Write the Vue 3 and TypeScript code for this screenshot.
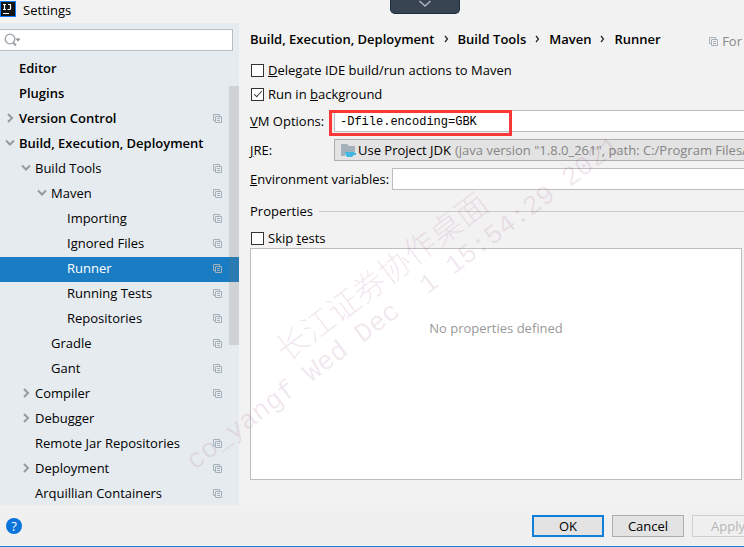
<script setup lang="ts">
import { ref } from 'vue'

interface TreeItem {
  label: string
  depth: number
  bold?: boolean
  state?: 'open' | 'closed'
  project?: boolean
}

const items: TreeItem[] = [
  { label: 'Editor', depth: 0, bold: true },
  { label: 'Plugins', depth: 0, bold: true },
  { label: 'Version Control', depth: 0, bold: true, state: 'closed', project: true },
  { label: 'Build, Execution, Deployment', depth: 0, bold: true, state: 'open' },
  { label: 'Build Tools', depth: 1, state: 'open', project: true },
  { label: 'Maven', depth: 2, state: 'open', project: true },
  { label: 'Importing', depth: 3, project: true },
  { label: 'Ignored Files', depth: 3, project: true },
  { label: 'Runner', depth: 3, project: true },
  { label: 'Running Tests', depth: 3, project: true },
  { label: 'Repositories', depth: 3, project: true },
  { label: 'Gradle', depth: 2, project: true },
  { label: 'Gant', depth: 2, project: true },
  { label: 'Compiler', depth: 1, state: 'closed', project: true },
  { label: 'Debugger', depth: 1, state: 'closed' },
  { label: 'Remote Jar Repositories', depth: 1, project: true },
  { label: 'Deployment', depth: 1, state: 'closed', project: true },
  { label: 'Arquillian Containers', depth: 1, project: true },
]

const crumbs = ['Build, Execution, Deployment', 'Build Tools', 'Maven', 'Runner']
const stamp = 'co_yangf Wed Dec  1 15:54:29 2021'

const selected = ref('Runner')
const query = ref('')
const delegate = ref(false)
const background = ref(true)
const skipTests = ref(false)
const vmOptions = ref('-Dfile.encoding=GBK')
const environment = ref('')
</script>

<template>
  <div class="window">
    <header class="titlebar">
      <svg class="logo" width="16" height="16" viewBox="0 0 16 16" aria-hidden="true">
        <rect width="16" height="16" fill="#087cfa" />
        <rect x="1" y="1" width="14" height="14" fill="#151515" />
        <path d="M3 3.500h3M4.500 3.500v5M3 8.500h3M8 3.500h3M10.500 3.500v4q0 1-1 1h-2" stroke="#fff" stroke-width="1.200" fill="none" />
        <path d="M3 12.500h6" stroke="#fff" />
      </svg>
      <span>Settings</span>
    </header>

    <div class="body">
      <aside class="sidebar">
        <div class="search">
          <svg width="18" height="14" viewBox="0 0 18 14" aria-hidden="true">
            <circle cx="6" cy="6" r="4.800" fill="none" stroke="#99a1a8" stroke-width="1.300" />
            <path d="M9 9.500l3 3" stroke="#99a1a8" stroke-width="2" />
            <path d="M11.500 5.500h5l-2.500 3z" fill="#7f8b91" />
          </svg>
          <input v-model="query" type="text" aria-label="Search settings" />
        </div>
        <ul class="tree" role="tree">
          <li
            v-for="item in items"
            :key="item.label"
            role="treeitem"
            :aria-selected="item.label === selected"
            :class="['node', 'depth-' + item.depth, { bold: item.bold, selected: item.label === selected }]"
            @click="selected = item.label"
          >
            <span class="arrow">
              <svg v-if="item.state === 'open'" width="10" height="10" viewBox="0 0 10 10" aria-hidden="true">
                <path d="M1 2.500l4 4 4-4" />
              </svg>
              <svg v-else-if="item.state === 'closed'" width="10" height="10" viewBox="0 0 10 10" aria-hidden="true">
                <path d="M3 1l4 4-4 4" />
              </svg>
            </span>
            <span class="label">{{ item.label }}</span>
            <svg v-if="item.project" class="copy" width="9" height="9" viewBox="0 0 9 9" aria-hidden="true">
              <path d="M2 6.500H.5V.5h6V2M2.500 2.500h6v6h-6zM4 4.500h3M4 6.500h3" />
            </svg>
          </li>
        </ul>
        <div class="scroll-thumb"></div>
      </aside>

      <main class="content">
        <nav class="crumbs">
          <template v-for="(crumb, i) in crumbs" :key="crumb">
            <svg v-if="i > 0" class="separator" width="5" height="8" viewBox="0 0 5 8" aria-hidden="true">
              <path d="M1 1l2.500 3L1 7" />
            </svg>
            <span>{{ crumb }}</span>
          </template>
          <span class="scope">
            <svg class="copy" width="9" height="9" viewBox="0 0 9 9" aria-hidden="true">
              <path d="M2 6.500H.5V.5h6V2M2.500 2.500h6v6h-6zM4 4.500h3M4 6.500h3" />
            </svg>
            For
          </span>
        </nav>

        <label class="check"><input v-model="delegate" type="checkbox" /><span><u>D</u>elegate IDE build/run actions to Maven</span></label>
        <label class="check"><input v-model="background" type="checkbox" /><span>Run in <u>b</u>ackground</span></label>

        <div class="row vm">
          <label for="vm"><u>V</u>M Options:</label>
          <div class="field">
            <input id="vm" v-model="vmOptions" class="mono" type="text" />
            <div class="highlight"></div>
          </div>
        </div>
        <div class="row">
          <label for="jre"><u>J</u>RE:</label>
          <div class="field combo">
            <svg width="16" height="15" viewBox="0 0 16 15" aria-hidden="true">
              <path d="M0 1h6l2 2h6v6H4v4H0z" fill="#a5b1b9" />
              <path d="M4 9h9.500v1H15v2h-2l-2 2H6q-2-2-2-5z" fill="#40b6e0" />
            </svg>
            <select id="jre"><option>Use Project JDK</option></select>
            <span class="hint">(java version "1.8.0_261", path: C:/Program Files/Java)</span>
          </div>
        </div>
        <div class="row env">
          <label for="env"><u>E</u>nvironment variables:</label>
          <div class="field"><input id="env" v-model="environment" type="text" /></div>
        </div>

        <h2 class="section">Properties</h2>
        <label class="check skip"><input v-model="skipTests" type="checkbox" /><span>Skip <u>t</u>ests</span></label>
        <div class="properties">No properties defined</div>
      </main>
    </div>

    <footer class="footer">
      <button class="help" type="button" aria-label="Help">?</button>
      <div class="actions">
        <button class="action primary" type="button">OK</button>
        <button class="action" type="button">Cancel</button>
        <button class="action" type="button" disabled>Apply</button>
      </div>
    </footer>

    <div class="pull-tab">
      <svg width="14" height="8" viewBox="0 0 14 8" aria-hidden="true">
        <path d="M1.500 1l5.500 5 5.500-5" fill="none" stroke="#aeb6c0" stroke-width="1.500" />
      </svg>
    </div>
    <div class="watermark cjk">长江证券协作桌面</div>
    <div class="watermark stamp">{{ stamp }}</div>
  </div>
</template>

<style>
body {
  background: #f0f0f0;
}
</style>

<style scoped>
.window {
  position: relative;
  display: flex;
  flex-direction: column;
  box-sizing: border-box;
  height: 100vh;
  overflow: hidden;
  border-bottom: 1px solid #1883d7;
  background: #f2f2f2;
  color: #000;
  font: 13px/20px "Open Sans", "Noto Sans", sans-serif;
}
input,
select,
button {
  box-sizing: border-box;
  margin: 0;
  font: inherit;
  color: inherit;
}
.titlebar {
  display: flex;
  flex: none;
  align-items: flex-start;
  gap: 7px;
  height: 23px;
}
.logo {
  margin-top: 1px;
}
.body {
  display: flex;
  flex: 1;
  min-height: 0;
}
.sidebar {
  position: relative;
  flex: none;
  width: 239px;
  overflow: hidden;
  background: #e6ebef;
}
.search {
  display: flex;
  align-items: center;
  box-sizing: border-box;
  height: 22px;
  margin: 6px 6px 6px 0;
  padding-left: 4px;
  border: 1px solid #b8bdc1;
  border-left: 0;
  background: #fff;
}
.search input {
  flex: 1;
  min-width: 0;
  border: 0;
  outline: 0;
  background: transparent;
}
.tree {
  margin: 0;
  padding: 0;
  list-style: none;
}
.node {
  display: flex;
  align-items: center;
  box-sizing: border-box;
  height: 25px;
  padding: 0 17px 3px 5px;
  white-space: nowrap;
}
.depth-1 {
  padding-left: 21px;
}
.depth-2 {
  padding-left: 37px;
}
.depth-3 {
  padding-left: 53px;
}
.bold {
  font-weight: 600;
}
.selected {
  background: #1a7dc4;
  color: #fff;
}
.arrow {
  display: flex;
  width: 14px;
}
.arrow path {
  fill: none;
  stroke: #959a9d;
  stroke-width: 2;
}
.label {
  flex: 1;
}
.copy {
  flex: none;
}
.copy path {
  fill: none;
  stroke: #a5b0b8;
}
.scroll-thumb {
  position: absolute;
  top: 63px;
  right: 0;
  width: 10px;
  height: 259px;
  background: rgba(115, 115, 115, 0.2);
}
.content {
  display: flex;
  flex: 1;
  flex-direction: column;
  min-width: 0;
  padding: 6px 0 25px 11px;
}
.crumbs {
  display: flex;
  align-items: center;
  gap: 9px;
  height: 20px;
  margin-bottom: 9px;
  font-weight: 600;
  white-space: nowrap;
}
.separator {
  flex: none;
}
.separator path {
  fill: none;
  stroke: #222;
  stroke-width: 1.2;
}
.scope {
  display: flex;
  align-items: center;
  gap: 4px;
  margin: 4px 2px 0 auto;
  color: #87898b;
  font-weight: 400;
}
.check {
  display: flex;
  align-items: center;
  align-self: flex-start;
  gap: 4px;
  height: 24px;
  padding-left: 1px;
}
.check input {
  position: relative;
  width: 13px;
  height: 13px;
  border: 1px solid #333;
  background: #fff;
  appearance: none;
}
.check input:checked::after {
  position: absolute;
  top: 0;
  left: 4px;
  width: 3px;
  height: 7px;
  border: solid #333;
  border-width: 0 1px 1px 0;
  content: "";
  transform: rotate(42deg);
}
.row {
  display: flex;
  align-items: center;
  height: 22px;
  margin-bottom: 7px;
  white-space: nowrap;
}
.row label {
  flex: none;
  width: 84px;
}
.vm {
  margin-top: 4px;
}
.env label {
  width: 142px;
}
.field {
  position: relative;
  flex: 1;
  min-width: 0;
  height: 22px;
}
.field input {
  display: block;
  width: 100%;
  height: 22px;
  padding: 0 5px;
  border: 1px solid #bdbdbd;
  border-right: 0;
  border-radius: 0;
  outline: 0;
  background: #fff;
}
.field .mono {
  padding-top: 2px;
  font: 12px/18px "Liberation Mono", monospace;
}
.highlight {
  position: absolute;
  top: 0;
  left: -5px;
  box-sizing: border-box;
  width: 183px;
  height: 26px;
  border: 3px solid #fb3737;
  pointer-events: none;
}
.combo {
  display: flex;
  align-items: center;
  box-sizing: border-box;
  padding-left: 6px;
  overflow: hidden;
  border: 1px solid #adadad;
  border-right: 0;
  background: #e3e3e3;
}
.combo svg {
  flex: none;
}
.combo select {
  flex: none;
  height: 20px;
  padding: 0 3px 0 1px;
  border: 0;
  outline: 0;
  background: transparent;
  appearance: none;
}
.hint {
  color: #858585;
}
.section {
  display: flex;
  align-items: center;
  gap: 6px;
  margin: 4px 0 7px;
  font-size: 13px;
  font-weight: 400;
}
.section::after {
  flex: 1;
  height: 1px;
  background: #c9c9c9;
  content: "";
}
.skip {
  height: 20px;
}
.properties {
  display: flex;
  flex: 1;
  align-items: flex-start;
  justify-content: center;
  box-sizing: border-box;
  margin-right: 2px;
  padding-top: 69px;
  border: 1px solid #bdbdbd;
  background: #fff;
  color: #999;
}
.footer {
  display: flex;
  flex: none;
  align-items: center;
  justify-content: space-between;
  height: 41px;
  padding-left: 6px;
  background: #f0f0f0;
}
.help {
  width: 16px;
  height: 16px;
  padding: 0;
  border: 0;
  border-radius: 50%;
  background: #0a74da;
  color: #fff;
  font-size: 13px;
  line-height: 16px;
}
.actions {
  display: flex;
  gap: 8px;
  margin-right: -20px;
}
.action {
  width: 72px;
  height: 22px;
  padding: 0;
  border: 1px solid #adadad;
  background: #e3e3e3;
  line-height: 18px;
}
.primary {
  border: 2px solid #0f80d9;
}
.action:disabled {
  border-color: #cfcfcf;
  background: #f0f0f0;
  color: #b5b5b5;
}
.pull-tab {
  position: absolute;
  top: 0;
  left: 390px;
  display: flex;
  justify-content: center;
  box-sizing: border-box;
  width: 70px;
  height: 14px;
  border: 1px solid #1c2c42;
  border-top: 0;
  border-radius: 0 0 5px 5px;
  background: #394452;
}
.watermark {
  position: absolute;
  color: rgba(150, 70, 130, 0.13);
  white-space: pre;
  pointer-events: none;
  transform: rotate(-37deg);
  transform-origin: 0 100%;
}
.cjk {
  top: 330px;
  left: 289px;
  font: 300 32px/36px "Noto Sans CJK SC", sans-serif;
}
.stamp {
  top: 443px;
  left: 201px;
  font: 27px/36px "Liberation Mono", monospace;
}
</style>
